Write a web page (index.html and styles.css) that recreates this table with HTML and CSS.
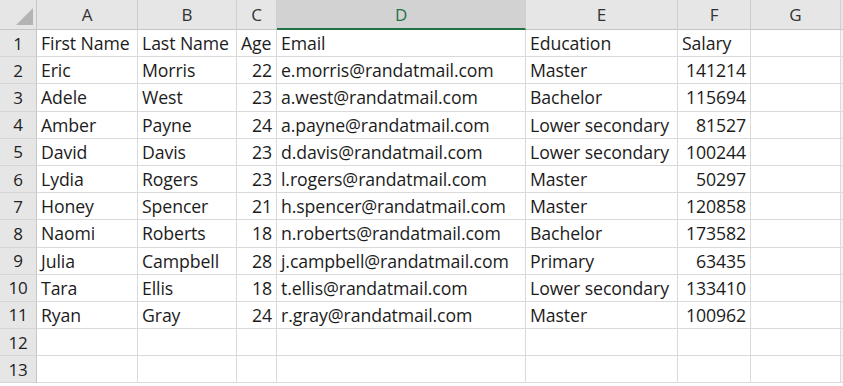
FILE: index.html
```html
<!DOCTYPE html>
<html>
<head>
<meta charset="utf-8">
<link rel="stylesheet" href="styles.css">
</head>
<body>
<div class="sheet">
  <div class="corner"><span class="tri"></span></div>
  <div class="ch">A</div><div class="ch">B</div><div class="ch">C</div><div class="ch sel">D</div><div class="ch">E</div><div class="ch">F</div><div class="ch">G</div><div class="ch rest"></div>

  <div class="rh">1</div><div class="c">First Name</div><div class="c">Last Name</div><div class="c">Age</div><div class="c">Email</div><div class="c">Education</div><div class="c">Salary</div><div class="c"></div><div class="c rest"></div>
  <div class="rh">2</div><div class="c">Eric</div><div class="c">Morris</div><div class="c n">22</div><div class="c">e.morris@randatmail.com</div><div class="c">Master</div><div class="c n">141214</div><div class="c"></div><div class="c rest"></div>
  <div class="rh">3</div><div class="c">Adele</div><div class="c">West</div><div class="c n">23</div><div class="c">a.west@randatmail.com</div><div class="c">Bachelor</div><div class="c n">115694</div><div class="c"></div><div class="c rest"></div>
  <div class="rh">4</div><div class="c">Amber</div><div class="c">Payne</div><div class="c n">24</div><div class="c">a.payne@randatmail.com</div><div class="c">Lower secondary</div><div class="c n">81527</div><div class="c"></div><div class="c rest"></div>
  <div class="rh">5</div><div class="c">David</div><div class="c">Davis</div><div class="c n">23</div><div class="c">d.davis@randatmail.com</div><div class="c">Lower secondary</div><div class="c n">100244</div><div class="c"></div><div class="c rest"></div>
  <div class="rh">6</div><div class="c">Lydia</div><div class="c">Rogers</div><div class="c n">23</div><div class="c">l.rogers@randatmail.com</div><div class="c">Master</div><div class="c n">50297</div><div class="c"></div><div class="c rest"></div>
  <div class="rh">7</div><div class="c">Honey</div><div class="c">Spencer</div><div class="c n">21</div><div class="c">h.spencer@randatmail.com</div><div class="c">Master</div><div class="c n">120858</div><div class="c"></div><div class="c rest"></div>
  <div class="rh">8</div><div class="c">Naomi</div><div class="c">Roberts</div><div class="c n">18</div><div class="c">n.roberts@randatmail.com</div><div class="c">Bachelor</div><div class="c n">173582</div><div class="c"></div><div class="c rest"></div>
  <div class="rh">9</div><div class="c">Julia</div><div class="c">Campbell</div><div class="c n">28</div><div class="c">j.campbell@randatmail.com</div><div class="c">Primary</div><div class="c n">63435</div><div class="c"></div><div class="c rest"></div>
  <div class="rh">10</div><div class="c">Tara</div><div class="c">Ellis</div><div class="c n">18</div><div class="c">t.ellis@randatmail.com</div><div class="c">Lower secondary</div><div class="c n">133410</div><div class="c"></div><div class="c rest"></div>
  <div class="rh">11</div><div class="c">Ryan</div><div class="c">Gray</div><div class="c n">24</div><div class="c">r.gray@randatmail.com</div><div class="c">Master</div><div class="c n">100962</div><div class="c"></div><div class="c rest"></div>
  <div class="rh">12</div><div class="c"></div><div class="c"></div><div class="c"></div><div class="c"></div><div class="c"></div><div class="c"></div><div class="c"></div><div class="c rest"></div>
  <div class="rh">13</div><div class="c"></div><div class="c"></div><div class="c"></div><div class="c"></div><div class="c"></div><div class="c"></div><div class="c"></div><div class="c rest"></div>
</div>
</body>
</html>
```
FILE: styles.css
```css
html, body {
  margin: 0;
  padding: 0;
  background: #ffffff;
}
.sheet {
  display: grid;
  grid-template-columns: 37px 101px 99px 40px 249px 152px 73px 90px 1fr;
  grid-template-rows: 30px repeat(13, 27.2px);
  font-family: "Open Sans", "Liberation Sans", sans-serif;
  font-size: 17.7px;
  letter-spacing: -0.1px;
  color: #1c1c1c;
  width: 843px;
}
.corner {
  background: #e6e6e6;
  border-right: 1px solid #c6c6c6;
  border-bottom: 1px solid #c6c6c6;
  position: relative;
}
.tri {
  position: absolute;
  right: 3px;
  bottom: 4px;
  width: 0;
  height: 0;
  border-left: 17px solid transparent;
  border-bottom: 17px solid #b4b4b4;
}
.ch {
  background: #e6e6e6;
  border-right: 1px solid #cfcfcf;
  border-bottom: 1px solid #c6c6c6;
  display: flex;
  align-items: center;
  justify-content: center;
  color: #333;
  font-size: 17px;
}
.ch.sel {
  background: #d2d2d2;
  color: #217346;
  border-bottom: 2px solid #217346;
}
.ch.rest {
  border-right: none;
}
.rh {
  background: #e6e6e6;
  border-right: 1px solid #c6c6c6;
  border-bottom: 1px solid #d6d6d6;
  display: flex;
  align-items: center;
  justify-content: center;
  color: #222;
  font-size: 17px;
}
.c {
  border-right: 1px solid #dadada;
  border-bottom: 1px solid #dadada;
  display: flex;
  align-items: center;
  padding: 0 4px;
  white-space: nowrap;
  overflow: visible;
}
.c.n {
  justify-content: flex-end;
}
.c.rest {
  border-right: none;
  background: #f3f3f3;
}
```
